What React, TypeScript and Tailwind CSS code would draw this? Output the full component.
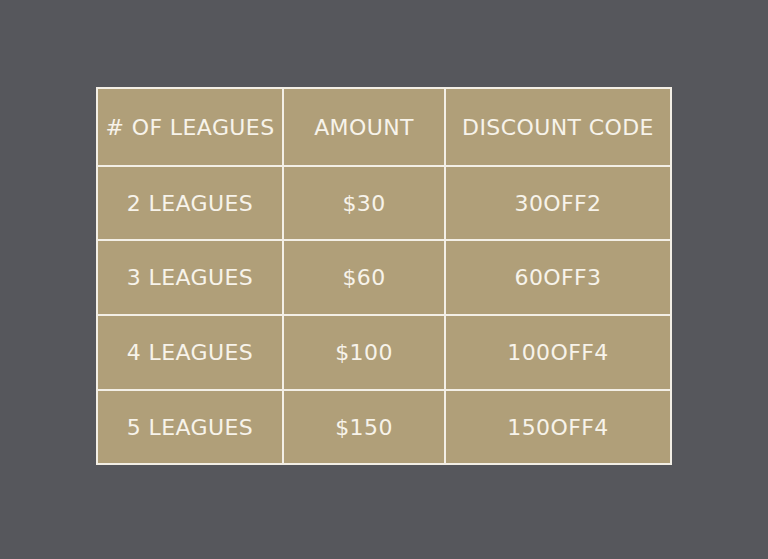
export default function App() {
  const rows = [
    ['2 LEAGUES', '$30', '30OFF2'],
    ['3 LEAGUES', '$60', '60OFF3'],
    ['4 LEAGUES', '$100', '100OFF4'],
    ['5 LEAGUES', '$150', '150OFF4'],
  ]
  const header = ['# OF LEAGUES', 'AMOUNT', 'DISCOUNT CODE']

  return (
    <div className="w-[768px] h-[559px] bg-[#56575c] pt-[87px] pl-[96px] font-['DejaVu_Sans',sans-serif]">
      <div className="w-[576px] grid grid-cols-[184px_160px_224px] grid-rows-[76px_72px_73px_73px_72px] gap-[2px] p-[2px] bg-[#f3efe6]">
        {header.map((h) => (
          <div
            key={h}
            className="bg-[#b09f79] flex items-center justify-center text-[#f7f3ea] text-[22px] tracking-[0.4px]"
          >
            {h}
          </div>
        ))}
        {rows.map((r) =>
          r.map((c, i) => (
            <div
              key={r[0] + i}
              className="bg-[#b09f79] flex items-center justify-center text-[#f7f3ea] text-[22px] tracking-[0.4px]"
            >
              {c}
            </div>
          ))
        )}
      </div>
    </div>
  )
}
